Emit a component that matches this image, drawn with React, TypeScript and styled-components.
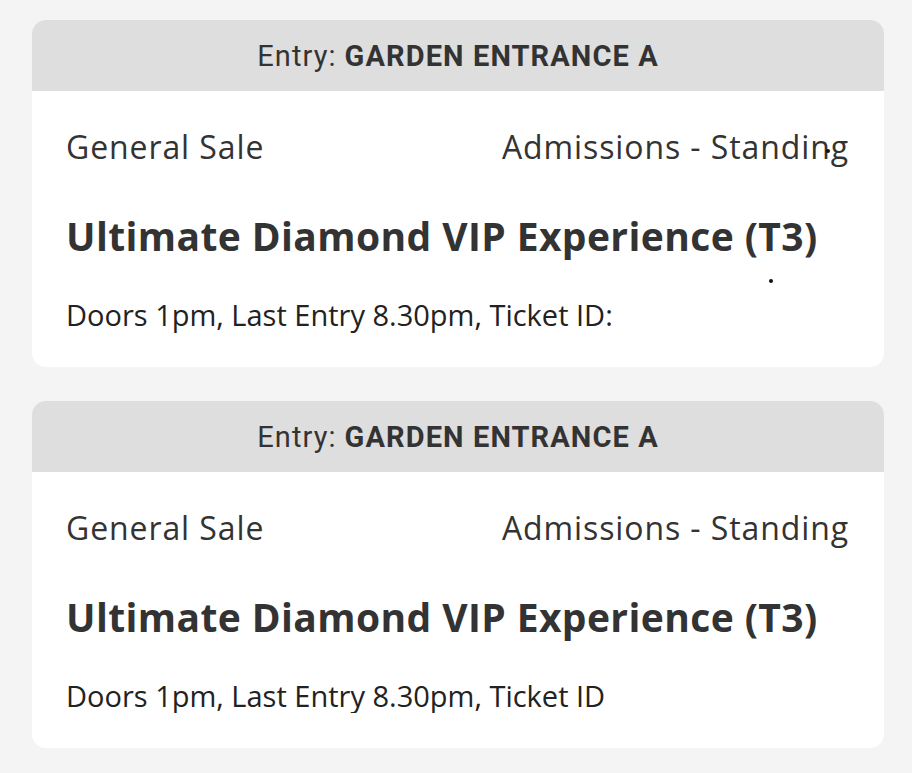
import React from "react";
import styled, { createGlobalStyle, css } from "styled-components";

const GlobalStyle = createGlobalStyle`
  html, body { margin: 0; padding: 0; background: #f4f4f4; }
  body { font-family: "Open Sans", "Noto Sans", sans-serif; color: #333; }
`;

const Page = styled.div`
  display: flex;
  flex-direction: column;
  gap: 34px;
  padding: 20px 28px 26px 32px;
  background: #f4f4f4;
  min-height: 773px;
  box-sizing: border-box;
`;

const Card = styled.div`
  position: relative;
  background: #fff;
  border-radius: 14px;
  overflow: hidden;
  display: flex;
  flex-direction: column;
`;

const Header = styled.div`
  background: #dedede;
  height: 71px;
  display: flex;
  align-items: center;
  justify-content: center;
  font-family: Roboto, "Noto Sans", sans-serif;
  font-size: 29px;
  letter-spacing: 1.1px;
  color: #333;
`;

const Strong = styled.b`
  font-weight: 700;
  margin-left: 8px;
`;

const Body = styled.div`
  padding: 34px 35px 35px 34px;
  display: flex;
  flex-direction: column;
`;

const Row = styled.div`
  display: flex;
  justify-content: space-between;
  align-items: center;
  font-size: 32px;
  letter-spacing: 0.9px;
  line-height: 44px;
  color: #333;
`;

const Title = styled.div`
  margin-top: 43px;
  font-size: 39px;
  font-weight: 700;
  letter-spacing: 0.4px;
  line-height: 48px;
  color: #333;
`;

const Info = styled.div<{ $clip?: number }>`
  margin-top: 38px;
  font-size: 29px;
  line-height: 34px;
  color: #222;
  white-space: nowrap;
  ${(p) =>
    p.$clip
      ? css`
          overflow: hidden;
          max-width: ${p.$clip}px;
        `
      : ""}
`;

const Dot = styled.span<{ $x: number; $y: number }>`
  position: absolute;
  left: ${(p) => p.$x}px;
  top: ${(p) => p.$y}px;
  width: 4px;
  height: 4px;
  border-radius: 50%;
  background: #111;
`;

type Ticket = {
  entry: string;
  sale: string;
  admission: string;
  title: string;
  info: string;
  clip?: number;
  dots?: { x: number; y: number }[];
};

const tickets: Ticket[] = [
  {
    entry: "GARDEN ENTRANCE A",
    sale: "General Sale",
    admission: "Admissions - Standing",
    title: "Ultimate Diamond VIP Experience (T3)",
    info: "Doors 1pm, Last Entry 8.30pm, Ticket ID:",
    dots: [
      { x: 794, y: 129 },
      { x: 737, y: 259 },
    ],
  },
  {
    entry: "GARDEN ENTRANCE A",
    sale: "General Sale",
    admission: "Admissions - Standing",
    title: "Ultimate Diamond VIP Experience (T3)",
    info: "Doors 1pm, Last Entry 8.30pm, Ticket ID:",
    clip: 538,
  },
];

export default function App() {
  return (
    <>
      <GlobalStyle />
      <Page>
        {tickets.map((t, i) => (
          <Card key={i}>
            <Header>
              Entry:<Strong>{t.entry}</Strong>
            </Header>
            <Body>
              <Row>
                <span>{t.sale}</span>
                <span>{t.admission}</span>
              </Row>
              <Title>{t.title}</Title>
              <Info $clip={t.clip}>{t.info}</Info>
            </Body>
            {t.dots?.map((d, j) => (
              <Dot key={j} $x={d.x} $y={d.y} />
            ))}
          </Card>
        ))}
      </Page>
    </>
  );
}
